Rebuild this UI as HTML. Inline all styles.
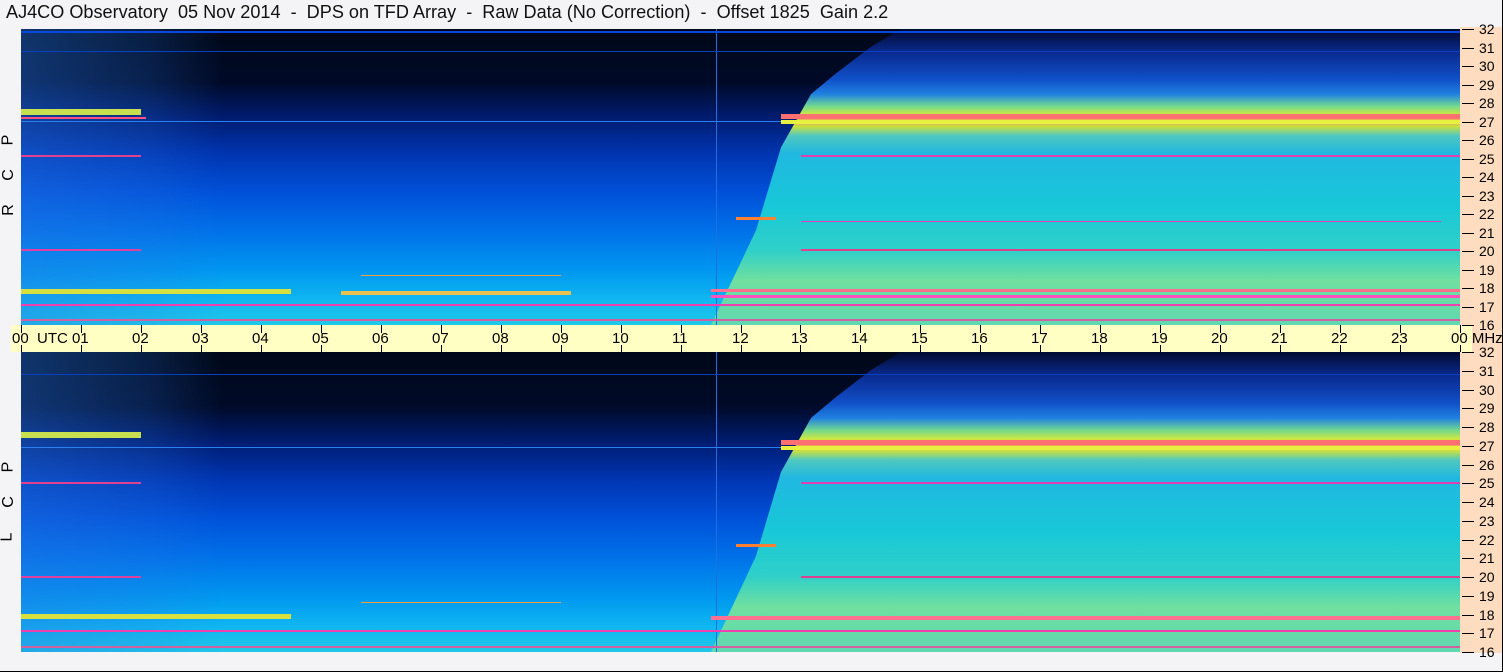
<!DOCTYPE html>
<html><head><meta charset="utf-8"><style>
*{margin:0;padding:0;box-sizing:border-box}
body{width:1503px;height:672px;background:#f4f4f6;position:relative;overflow:hidden;font-family:"Liberation Sans",sans-serif;border-right:1px solid #000;border-bottom:1px solid #000}
.title{position:absolute;left:6px;top:2px;font-size:18.1px;color:#111;white-space:pre}
.panel{position:absolute;left:21px;width:1439px;overflow:hidden}
.L{position:absolute;inset:0;background:
linear-gradient(90deg,rgba(40,120,230,.4) 0,rgba(40,120,230,.2) 9%,rgba(0,0,0,0) 14%),
linear-gradient(180deg,#000818 0%,#000a28 18%,#001c70 30%,#0034b0 42%,#0050d8 55%,#0070e8 68%,#0098f0 82%,#10b8f0 92%,#20c8e8 100%)}
.R{position:absolute;inset:0;clip-path:polygon(880px 0,1439px 0,1439px 100%,690px 100%,735px 68%,760px 40%,790px 22%,815px 15%,850px 6%);
background:linear-gradient(180deg,#000a30 0%,#0a2a90 8%,#1050c8 17%,#2080e0 22%,#70d890 26%,#d0e840 29%,#f0a060 31%,#c8e040 33%,#50c8c0 36%,#20b8e0 42%,#18c8d8 60%,#30d0c8 75%,#70e0a0 85%,#60d8b0 100%)}
.s{position:absolute;height:2px}
.vl{position:absolute;top:0;bottom:0;left:695px;width:1px;background:#1e70e0}
.axis{position:absolute;left:1460px;width:42px;top:27px;height:626px;background:#fddcc0}
.band{position:absolute;left:11px;width:1461px;top:325px;height:27px;background:#ffffc4}
.lbl{position:absolute;font-size:15px;color:#000;white-space:nowrap}
.tk{position:absolute;width:1px;background:#000}
.ht{position:absolute;height:1px;width:12px;left:1462px;background:#000}
.side{position:absolute;left:3px;font-size:16px;transform:rotate(-90deg);color:#000}
</style></head><body>
<div class="title">AJ4CO Observatory  05 Nov 2014  -  DPS on TFD Array  -  Raw Data (No Correction)  -  Offset 1825  Gain 2.2</div>

<div class="panel" style="top:29px;height:296px">
<div class="L"></div><div class="R"></div><div class="vl"></div>
<div class="s" style="top:2px;left:0;width:100%;background:#0848e0"></div>
<div class="s" style="top:22px;left:0;width:100%;height:1px;background:#0840c0"></div>
<div class="s" style="top:92px;left:0;width:100%;height:1px;background:#2a80f0"></div>
<div class="s" style="top:80px;left:0;width:120px;height:6px;background:#c8e050"></div>
<div class="s" style="top:88px;left:0;width:125px;background:#ff5080"></div>
<div class="s" style="top:85px;left:760px;width:680px;height:5px;background:#ff7070"></div>
<div class="s" style="top:91px;left:760px;width:680px;height:4px;background:#e8f040"></div>
<div class="s" style="top:126px;left:0;width:120px;background:#e04090"></div>
<div class="s" style="top:126px;left:780px;width:660px;background:#e040b0"></div>
<div class="s" style="top:188px;left:715px;width:40px;height:3px;background:#ff8030"></div>
<div class="s" style="top:192px;left:780px;width:640px;height:1px;background:#e040c0"></div>
<div class="s" style="top:220px;left:0;width:120px;background:#e040a0"></div>
<div class="s" style="top:220px;left:780px;width:660px;background:#e04090"></div>
<div class="s" style="top:246px;left:340px;width:200px;height:1px;background:#f0a040"></div>
<div class="s" style="top:260px;left:0;width:270px;height:5px;background:#d8e040"></div>
<div class="s" style="top:262px;left:320px;width:230px;height:4px;background:#e8c050"></div>
<div class="s" style="top:260px;left:690px;width:750px;height:3px;background:#ff7090"></div>
<div class="s" style="top:266px;left:690px;width:750px;height:3px;background:#ff50c0"></div>
<div class="s" style="top:275px;left:0;width:1439px;background:#f040b0"></div>
<div class="s" style="top:290px;left:0;width:1439px;height:2px;background:#d060a0"></div>
</div>

<div class="panel" style="top:352px;height:300px">
<div class="L"></div><div class="R"></div><div class="vl"></div>
<div class="s" style="top:22px;left:0;width:100%;height:1px;background:#0840c0"></div>
<div class="s" style="top:95px;left:0;width:100%;height:1px;background:#2a80f0"></div>
<div class="s" style="top:80px;left:0;width:120px;height:6px;background:#c8e050"></div>
<div class="s" style="top:88px;left:760px;width:680px;height:5px;background:#ff7070"></div>
<div class="s" style="top:94px;left:760px;width:680px;height:4px;background:#e8f040"></div>
<div class="s" style="top:130px;left:0;width:120px;background:#e04090"></div>
<div class="s" style="top:130px;left:780px;width:660px;background:#e040b0"></div>
<div class="s" style="top:192px;left:715px;width:40px;height:3px;background:#ff8030"></div>
<div class="s" style="top:224px;left:0;width:120px;background:#e040a0"></div>
<div class="s" style="top:224px;left:780px;width:660px;background:#e04090"></div>
<div class="s" style="top:250px;left:340px;width:200px;height:1px;background:#f0a040"></div>
<div class="s" style="top:262px;left:0;width:270px;height:5px;background:#d8e040"></div>
<div class="s" style="top:264px;left:690px;width:750px;height:4px;background:#ff7090"></div>
<div class="s" style="top:278px;left:0;width:1439px;background:#f040b0"></div>
<div class="s" style="top:294px;left:0;width:1439px;height:2px;background:#d060a0"></div>
</div>

<div class="axis"></div>
<div class="band"></div>

<div class="side" style="top:131px">P</div>
<div class="side" style="top:166px">C</div>
<div class="side" style="top:201px">R</div>
<div class="side" style="top:458px">P</div>
<div class="side" style="top:493px">C</div>
<div class="side" style="top:528px">L</div>

<div id="ax"></div>
<script>
var h='';
for(var i=0;i<=24;i++){var x=21+i*59.96;
h+='<div class="tk" style="left:'+x.toFixed(0)+'px;top:325px;height:8px"></div><div class="tk" style="left:'+x.toFixed(0)+'px;top:345px;height:7px"></div>';
var t=(i%24<10?'0':'')+(i%24);
if(i==0)h+='<div class="lbl" style="left:12px;top:330px">00&nbsp; UTC</div>';
else if(i==24)h+='<div class="lbl" style="left:1451px;top:330px">00 MHz</div>';
else h+='<div class="lbl" style="left:'+(x-9).toFixed(0)+'px;top:330px">'+t+'</div>';}
for(var f=16;f<=32;f++){var y1=29+(32-f)*18.5,y2=352+(32-f)*18.75;
h+='<div class="ht" style="top:'+y1.toFixed(0)+'px"></div><div class="lbl" style="left:1479px;top:'+(y1-8).toFixed(0)+'px;font-size:14px">'+f+'</div>';
h+='<div class="ht" style="top:'+y2.toFixed(0)+'px"></div><div class="lbl" style="left:1479px;top:'+(y2-8).toFixed(0)+'px;font-size:14px">'+f+'</div>';}
document.getElementById('ax').innerHTML=h;
</script>
</body></html>
